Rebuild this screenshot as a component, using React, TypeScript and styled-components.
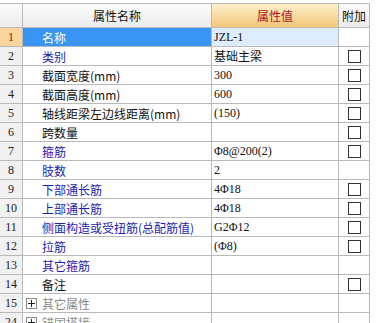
import React from "react";
import styled, { createGlobalStyle, css } from "styled-components";

const GlobalStyle = createGlobalStyle`
  html, body {
    margin: 0;
    padding: 0;
    background: #ffffff;
    overflow: hidden;
  }
  body {
    font-family: "Noto Sans CJK SC", "Liberation Sans", sans-serif;
    font-size: 12px;
  }
`;

const LINE = "#b9b9b9";

const Grid = styled.div`
  margin-top: 3px;
  width: 370px;
  display: grid;
  grid-template-columns: 23px 189px 127px 31px;
  border-top: 1px solid ${LINE};
`;

const HeadCell = styled.div<{ $accent?: boolean }>`
  box-sizing: border-box;
  height: 24px;
  border-right: 1px solid ${LINE};
  border-bottom: 1px solid ${LINE};
  display: flex;
  align-items: center;
  justify-content: center;
  color: #111;
  font-size: 12px;
  background: linear-gradient(#fbfbfb, #ececec);
  ${(p) =>
    p.$accent &&
    css`
      background: linear-gradient(#fdefcc, #f3c779);
      color: #b0141e;
    `}
`;

const NumCell = styled.div<{ $active?: boolean }>`
  box-sizing: border-box;
  height: 19px;
  border-right: 1px solid ${LINE};
  border-bottom: 1px solid ${LINE};
  display: flex;
  align-items: center;
  justify-content: center;
  background: #f1f1f1;
  color: #222;
  font-family: "Liberation Serif", "Noto Sans CJK SC", serif;
  font-size: 12px;
  ${(p) =>
    p.$active &&
    css`
      background: #fbd69c;
      color: #8a1010;
    `}
`;

const NameCell = styled.div<{ $tone: "black" | "blue" | "gray"; $active?: boolean }>`
  box-sizing: border-box;
  height: 19px;
  border-right: 1px solid ${LINE};
  border-bottom: 1px solid ${LINE};
  display: flex;
  align-items: center;
  padding-left: 19px;
  white-space: nowrap;
  overflow: hidden;
  color: ${(p) => (p.$tone === "blue" ? "#1c1cb0" : p.$tone === "gray" ? "#8a8a8a" : "#111")};
  ${(p) =>
    p.$active &&
    css`
      background: #3a94f3;
      color: #ffffff;
    `}
`;

const ValueCell = styled.div<{ $active?: boolean }>`
  box-sizing: border-box;
  height: 19px;
  border-right: 1px solid ${LINE};
  border-bottom: 1px solid ${LINE};
  display: flex;
  align-items: center;
  padding-left: 2px;
  white-space: nowrap;
  overflow: hidden;
  color: #111;
  font-family: "Liberation Serif", "Noto Sans CJK SC", serif;
  ${(p) =>
    p.$active &&
    css`
      background: #deedfd;
    `}
`;

const AddCell = styled.div`
  box-sizing: border-box;
  height: 19px;
  border-right: 1px solid ${LINE};
  border-bottom: 1px solid ${LINE};
  display: flex;
  align-items: center;
  justify-content: center;
`;

const Check = styled.span`
  box-sizing: border-box;
  width: 13px;
  height: 13px;
  border: 1px solid #333;
  background: #fff;
`;

const Expander = styled.span`
  position: relative;
  box-sizing: border-box;
  width: 11px;
  height: 11px;
  border: 1px solid #8c8c8c;
  margin-left: -16px;
  margin-right: 5px;
  flex: none;
  &::before,
  &::after {
    content: "";
    position: absolute;
    background: #222;
  }
  &::before {
    left: 1px;
    right: 1px;
    top: 4px;
    height: 1px;
  }
  &::after {
    top: 1px;
    bottom: 1px;
    left: 4px;
    width: 1px;
  }
`;

type Row = {
  no: string;
  name: string;
  tone: "black" | "blue" | "gray";
  value?: string;
  check?: boolean;
  group?: boolean;
};

const rows: Row[] = [
  { no: "1", name: "名称", tone: "blue", value: "JZL-1" },
  { no: "2", name: "类别", tone: "blue", value: "基础主梁", check: true },
  { no: "3", name: "截面宽度(mm)", tone: "black", value: "300", check: true },
  { no: "4", name: "截面高度(mm)", tone: "black", value: "600", check: true },
  { no: "5", name: "轴线距梁左边线距离(mm)", tone: "black", value: "(150)", check: true },
  { no: "6", name: "跨数量", tone: "black", value: "", check: true },
  { no: "7", name: "箍筋", tone: "blue", value: "Φ8@200(2)", check: true },
  { no: "8", name: "肢数", tone: "blue", value: "2" },
  { no: "9", name: "下部通长筋", tone: "blue", value: "4Φ18", check: true },
  { no: "10", name: "上部通长筋", tone: "blue", value: "4Φ18", check: true },
  { no: "11", name: "侧面构造或受扭筋(总配筋值)", tone: "blue", value: "G2Φ12", check: true },
  { no: "12", name: "拉筋", tone: "blue", value: "(Φ8)", check: true },
  { no: "13", name: "其它箍筋", tone: "blue", value: "" },
  { no: "14", name: "备注", tone: "black", value: "", check: true },
  { no: "15", name: "其它属性", tone: "gray", group: true },
  { no: "24", name: "锚固搭接", tone: "gray", group: true },
];

export default function App() {
  return (
    <>
      <GlobalStyle />
      <Grid>
        <HeadCell />
        <HeadCell>属性名称</HeadCell>
        <HeadCell $accent>属性值</HeadCell>
        <HeadCell>附加</HeadCell>
        {rows.map((r, i) => {
          const active = i === 0;
          return (
            <React.Fragment key={r.no}>
              <NumCell $active={active}>{r.no}</NumCell>
              <NameCell $tone={r.tone} $active={active}>
                {r.group && <Expander />}
                {r.name}
              </NameCell>
              <ValueCell $active={active}>{r.value}</ValueCell>
              <AddCell>{r.check && <Check />}</AddCell>
            </React.Fragment>
          );
        })}
      </Grid>
    </>
  );
}
